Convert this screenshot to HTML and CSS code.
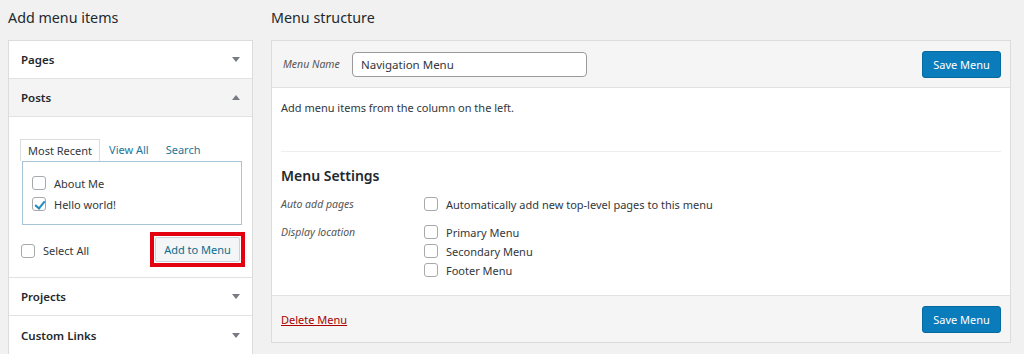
FILE: index.html
```html
<!DOCTYPE html>
<html lang="en">
<head>
  <meta charset="UTF-8" />
  <title>Menus</title>
  <link rel="stylesheet" href="styles.css">
</head>
<body>
  <div class="menus">
    <!-- Left column: add items -->
    <div class="col-left">
      <h2 class="col-title">Add menu items</h2>
      <div class="accordion">
        <div class="acc-head"><span>Pages</span><span class="arrow down"></span></div>
        <div class="acc-head open"><span>Posts</span><span class="arrow up"></span></div>
        <div class="acc-body">
          <div class="tabs">
            <span class="tab active">Most Recent</span>
            <span class="tab">View All</span>
            <span class="tab">Search</span>
          </div>
          <div class="tab-panel">
            <label class="check"><span class="box"></span>About Me</label>
            <label class="check"><span class="box checked"></span>Hello world!</label>
          </div>
          <div class="acc-actions">
            <label class="check"><span class="box"></span>Select All</label>
            <span class="highlight"><button class="btn-secondary">Add to Menu</button></span>
          </div>
        </div>
        <div class="acc-head"><span>Projects</span><span class="arrow down"></span></div>
        <div class="acc-head"><span>Custom Links</span><span class="arrow down"></span></div>
      </div>
    </div>

    <!-- Right column: menu structure -->
    <div class="col-right">
      <h2 class="col-title">Menu structure</h2>
      <div class="menu-box">
        <div class="menu-header">
          <label class="name-label">Menu Name</label>
          <div class="name-input">Navigation Menu</div>
          <button class="btn-primary">Save Menu</button>
        </div>
        <div class="menu-body">
          <p class="hint">Add menu items from the column on the left.</p>
          <div class="settings">
            <h3>Menu Settings</h3>
            <div class="setting-row">
              <div class="setting-label">Auto add pages</div>
              <div class="setting-opts">
                <label class="check"><span class="box"></span>Automatically add new top-level pages to this menu</label>
              </div>
            </div>
            <div class="setting-row">
              <div class="setting-label">Display location</div>
              <div class="setting-opts">
                <label class="check"><span class="box"></span>Primary Menu</label>
                <label class="check"><span class="box"></span>Secondary Menu</label>
                <label class="check"><span class="box"></span>Footer Menu</label>
              </div>
            </div>
          </div>
        </div>
        <div class="menu-footer">
          <a class="delete-link" href="#">Delete Menu</a>
          <button class="btn-primary">Save Menu</button>
        </div>
      </div>
    </div>
  </div>
</body>
</html>
```

FILE: styles.css
```css
* { box-sizing: border-box; margin: 0; padding: 0; }

body {
  background: #f1f1f1;
  font-family: 'Noto Sans', sans-serif;
  font-size: 11px;
  color: #32373c;
  width: 1024px;
  height: 354px;
  overflow: hidden;
}

.menus {
  display: flex;
  gap: 18px;
  padding-left: 8px;
}

.col-left  { width: 245px; }
.col-right { width: 740px; }

.col-title {
  font-size: 14.3px;
  font-weight: 400;
  color: #23282d;
  height: 40px;
  line-height: 36px;
}

/* Accordion */
.accordion {
  background: #fff;
  border: 1px solid #dcdcdc;
}
.acc-head {
  height: 38px;
  display: flex;
  align-items: center;
  justify-content: space-between;
  padding: 0 12px 0 12px;
  font-weight: 600;
  font-size: 11.5px;
  color: #23282d;
  border-bottom: 1px solid #e2e2e2;
}
.acc-head.open { background: #f4f4f4; }
.accordion .acc-head:last-child { border-bottom: none; }

.arrow {
  width: 0; height: 0;
  border-left: 4px solid transparent;
  border-right: 4px solid transparent;
}
.arrow.down { border-top: 5px solid #787c82; }
.arrow.up   { border-bottom: 5px solid #787c82; }

.acc-body {
  height: 161px;
  padding: 22px 11px 0 12px;
  border-bottom: 1px solid #e2e2e2;
}

.tabs { display: flex; height: 22px; margin-left: -1px; }
.tab {
  padding: 0 7px;
  line-height: 21px;
  color: #21759b;
  margin-right: 3px;
}
.tab.active {
  color: #32373c;
  border: 1px solid #dcdcdc;
  border-bottom: none;
  background: #fff;
  margin-right: 2px;
}

.tab-panel {
  margin-left: 1px;
  width: 220px;
  height: 64px;
  border: 1px solid #a6c3d8;
  padding: 13px 9px 0;
  display: flex;
  flex-direction: column;
  gap: 5px;
}

.check {
  display: flex;
  align-items: center;
  gap: 8px;
  height: 16px;
  white-space: nowrap;
}
.box {
  width: 14px;
  height: 14px;
  border: 1px solid #a7aaad;
  border-radius: 3px;
  background: #fff;
  position: relative;
  flex: none;
}
.box.checked::after {
  content: '';
  position: absolute;
  left: 4px; top: 1px;
  width: 4px; height: 8px;
  border-right: 2px solid #1e8cbe;
  border-bottom: 2px solid #1e8cbe;
  transform: rotate(40deg);
}

.acc-actions {
  display: flex;
  justify-content: space-between;
  align-items: center;
  margin-top: 7px;
  width: 227px;
  margin-left: -3px;
}
.acc-actions .check { margin-top: 2px; margin-left: 3px; }

/* red box drawn round the button */
.highlight {
  display: inline-flex;
  border: 4px solid #e3000f;
  padding: 1px;
}

.btn-secondary {
  font-family: inherit;
  font-size: 11px;
  color: #0a6e8f;
  background: #f3f5f6;
  border: 1px solid #c6d4dc;
  border-radius: 2px;
  width: 85px;
  height: 25px;
}

/* Right panel */
.menu-box {
  border: 1px solid #dcdcdc;
  background: #fff;
  height: 303px;
  display: flex;
  flex-direction: column;
}
.menu-header {
  height: 47px;
  background: #f5f5f5;
  border-bottom: 1px solid #e2e2e2;
  display: flex;
  align-items: center;
  padding: 0 9px 0 11px;
}
.name-label {
  font-style: italic;
  font-size: 10.5px;
  color: #555;
  width: 69px;
}
.name-input {
  width: 235px;
  height: 25px;
  border: 1px solid #9a9a9a;
  border-radius: 4px;
  background: #fff;
  padding: 0 8px;
  line-height: 23px;
  font-size: 11.5px;
  color: #32373c;
}
.btn-primary {
  margin-left: auto;
  font-family: inherit;
  font-size: 11px;
  color: #fff;
  background: #0a7cbb;
  border: 1px solid #066a9f;
  border-radius: 3px;
  width: 79px;
  height: 27px;
}

.menu-body {
  flex: 1;
  padding: 0 9px 0 9px;
}
.hint {
  height: 64px;
  line-height: 40px;
  border-bottom: 1px solid #eeeeee;
}

.settings { padding-top: 15px; }
.settings h3 {
  font-size: 14px;
  font-weight: 600;
  color: #23282d;
  line-height: 18px;
  margin-bottom: 11px;
}
.setting-row {
  display: flex;
  margin-bottom: 12px;
}
.setting-label {
  width: 143px;
  font-style: italic;
  font-size: 10.5px;
  color: #555;
  line-height: 16px;
}
.setting-opts {
  display: flex;
  flex-direction: column;
  gap: 3px;
}

.menu-footer {
  height: 47px;
  background: #f5f5f5;
  border-top: 1px solid #e2e2e2;
  display: flex;
  align-items: center;
  padding: 0 9px 0 9px;
}
.delete-link {
  color: #a00;
}
```
